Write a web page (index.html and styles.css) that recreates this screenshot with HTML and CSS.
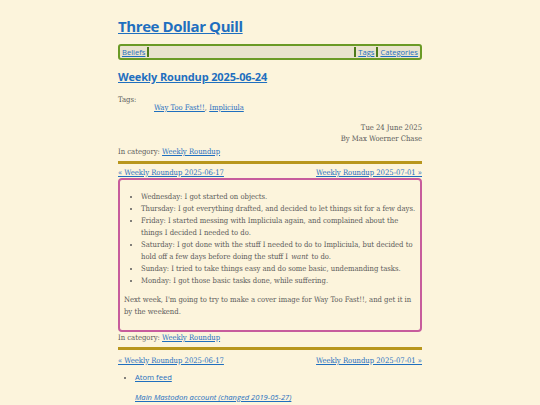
FILE: index.html
```html
<!DOCTYPE html>
<html>
<head>
<meta charset="utf-8">
<link rel="stylesheet" href="styles.css">
</head>
<body>
<div class="page">
  <header class="site-header">
    <h1 class="site-title"><a href="#">Three Dollar Quill</a></h1>
    <nav class="nav">
      <a class="nav-item" href="#">Beliefs</a>
      <span class="nav-spacer"></span>
      <a class="nav-item" href="#">Tags</a>
      <a class="nav-item nav-last" href="#">Categories</a>
    </nav>
  </header>
  <article class="post">
    <h2 class="post-title"><a href="#">Weekly Roundup 2025-06-24</a></h2>
    <div class="tags">
      <div class="tags-label">Tags:</div>
      <div class="tags-list"><a href="#">Way Too Fast!!</a>, <a href="#">Impliciula</a></div>
    </div>
    <div class="meta">
      <div>Tue 24 June 2025</div>
      <div>By Max Woerner Chase</div>
    </div>
    <div class="category">In category: <a href="#">Weekly Roundup</a></div>
    <div class="pager pager-top">
      <a href="#">« Weekly Roundup 2025-06-17</a>
      <a href="#">Weekly Roundup 2025-07-01 »</a>
    </div>
    <div class="content">
      <ul class="days">
        <li>Wednesday: I got started on objects.</li>
        <li>Thursday: I got everything drafted, and decided to let things sit for a few days.</li>
        <li>Friday: I started messing with Impliciula again, and complained about the things I decided I needed to do.</li>
        <li>Saturday: I got done with the stuff I needed to do to Impliciula, but decided to hold off a few days before doing the stuff I <em class="stress">want</em> to do.</li>
        <li>Sunday: I tried to take things easy and do some basic, undemanding tasks.</li>
        <li>Monday: I got those basic tasks done, while suffering.</li>
      </ul>
      <p class="para">Next week, I'm going to try to make a cover image for Way Too Fast!!, and get it in by the weekend.</p>
    </div>
    <div class="category category-bottom">In category: <a href="#">Weekly Roundup</a></div>
    <div class="pager pager-bottom">
      <a href="#">« Weekly Roundup 2025-06-17</a>
      <a href="#">Weekly Roundup 2025-07-01 »</a>
    </div>
  </article>
  <footer class="footer">
    <ul class="feeds">
      <li><a class="sans-link" href="#">Atom feed</a></li>
    </ul>
    <p class="mastodon"><a href="#">Main Mastodon account (changed 2019-05-27)</a></p>
  </footer>
</div>
</body>
</html>
```

FILE: styles.css
```css
html, body {
  margin: 0;
  padding: 0;
  background: #fcf4dc;
}
body {
  font-family: "DejaVu Serif", serif;
  font-size: 7.6px;
  line-height: 12px;
  color: #5a5a5a;
}
.post, .footer {
  font-stretch: condensed;
}
a {
  color: #1f6fbf;
}
.page {
  width: 304px;
  margin: 0 auto;
  padding-top: 15px;
}
.site-title {
  margin: 0;
  font-family: "Open Sans", sans-serif;
  font-weight: 700;
  font-size: 15px;
  line-height: 22px;
  letter-spacing: -0.4px;
}
.nav {
  display: flex;
  margin-top: 7px;
  height: 12px;
  border: 2px solid #6a9a26;
  border-radius: 3px;
  background: #e9e3cd;
  font-family: "Open Sans", sans-serif;
  font-size: 7.6px;
  line-height: 12px;
  align-items: center;
}
.nav-item {
  padding: 0 2px;
}
.nav-spacer {
  flex: 1;
  height: 10px;
  border-left: 2px solid #4d7a1a;
  border-right: 2px solid #4d7a1a;
}
.nav-last {
  border-left: 2px solid #4d7a1a;
  height: 10px;
  line-height: 10px;
}
.post-title {
  margin: 8px 0 0;
  font-family: "Open Sans", sans-serif;
  font-stretch: normal;
  font-weight: 700;
  font-size: 11px;
  line-height: 18px;
  letter-spacing: -0.15px;
}
.tags {
  margin-top: 9px;
}
.tags-label {
  line-height: 9px;
}
.tags-list {
  margin-top: -2px;
  padding-left: 36px;
  line-height: 12px;
}
.meta {
  margin-top: 8px;
  text-align: right;
  line-height: 11px;
}
.category {
  margin-top: 2px;
  padding-bottom: 3px;
  border-bottom: 3px solid #b8961c;
}
.pager {
  display: flex;
  justify-content: space-between;
  margin-top: 3px;
  line-height: 11px;
}
.pager-bottom {
  margin-top: 5px;
}
.content {
  border: 2px solid #c75c9c;
  border-radius: 4px;
  padding: 6px 4px 12px;
}
.days {
  margin: 5px 0 0;
  padding-left: 17px;
}
.stress {
  margin-left: 1px;
  margin-right: 1px;
}
.para {
  margin: 7px 0 0;
}
.category-bottom {
  margin-top: 0;
}
.footer {
  margin-top: 4px;
}
.feeds {
  margin: 5px 0 0;
  padding-left: 17px;
}
.sans-link {
  font-family: "Open Sans", sans-serif;
  font-stretch: normal;
}
.mastodon {
  margin: 7px 0 0 17px;
  font-family: "Open Sans", sans-serif;
  font-stretch: normal;
  font-style: italic;
}
```
